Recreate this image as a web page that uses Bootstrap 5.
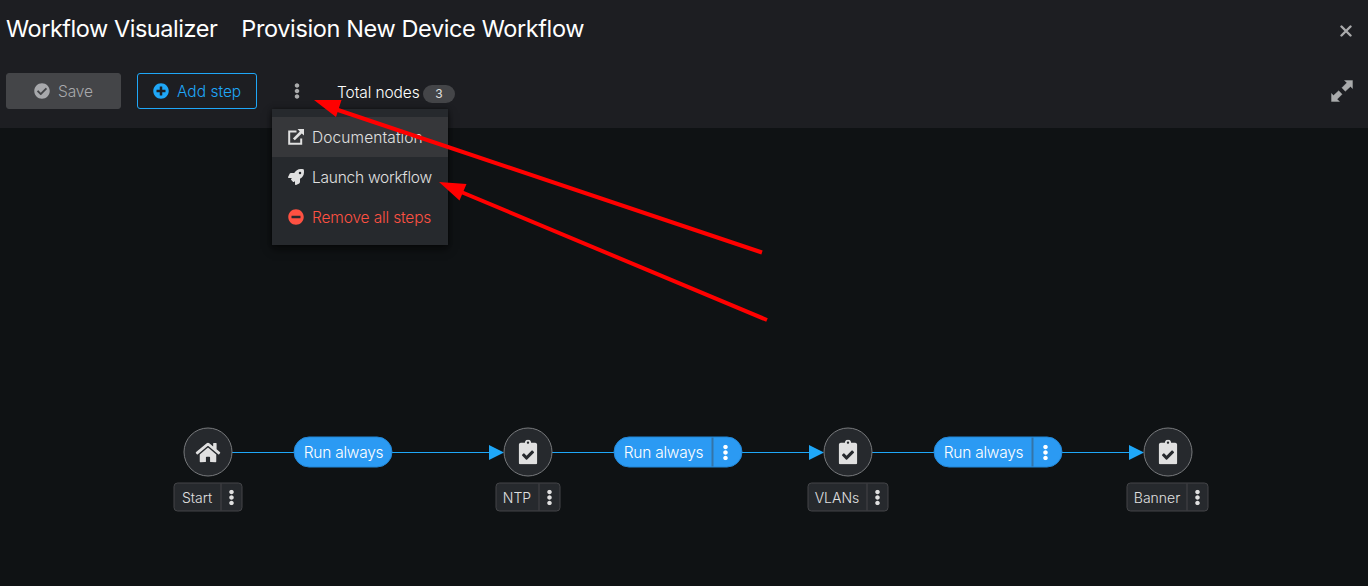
<!DOCTYPE html>
<html lang="en" data-bs-theme="dark">
<head>
<meta charset="utf-8">
<title>Workflow Visualizer</title>
<meta name="viewport" content="width=device-width, initial-scale=1">
<link href="https://cdn.jsdelivr.net/npm/bootstrap@5.3.0/dist/css/bootstrap.min.css" rel="stylesheet">
<style>
  body { font-family: Inter, "Liberation Sans", sans-serif; background: #0f1214; color: #e0e0e0; font-size: 16px; line-height: 24px; }
  svg { fill: currentColor; flex: none; }
  .top { background: #1d1e22; height: 128px; }
  .title-row { height: 58px; padding: 0 16px 0 6px; }
  .title-row h1 { font-size: 23.5px; line-height: 30px; font-weight: 400; color: #fff; letter-spacing: -.38px; }
  .title-row h1:first-child { letter-spacing: -.46px; }
  .tools { height: 36px; margin-top: 15px; padding: 0 15px 0 6px; }
  .btn-tool { --bs-btn-border-radius: 3px; --bs-btn-padding-y: 5px; --bs-btn-padding-x: 15px; --bs-btn-line-height: 24px; --bs-btn-font-size: 15.5px; font-weight: 300; height: 36px; }
  .btn-tool span, .actions .dropdown-item span { padding-top: 2px; }
  .btn-save { width: 115px; letter-spacing: -.1px; --bs-btn-disabled-bg: #444548; --bs-btn-disabled-color: #a8a9ac; --bs-btn-disabled-border-color: #444548; --bs-btn-disabled-opacity: 1; }
  .btn-add { width: 120px; --bs-btn-color: #1fa7f8; --bs-btn-border-color: #1fa7f8; }
  .dim { color: #aaabac; }
  .more { margin: 0 37px; }
  .total { font-size: 15.5px; font-weight: 300; letter-spacing: -.1px; color: #fff; width: 86px; margin-top: 4px; }
  .count { width: 32px; height: 18px; margin-top: 5px; background: #444548; font-size: 12px; line-height: 18px; }
  .actions { --bs-dropdown-bg: #26292d; --bs-dropdown-border-width: 0; --bs-dropdown-border-radius: 0; --bs-dropdown-padding-y: 8px; --bs-dropdown-link-color: #e0e0e0; --bs-dropdown-item-padding-x: 16px; --bs-dropdown-item-padding-y: 8px; --bs-dropdown-min-width: 176px; width: 176px; height: 136px; top: 26px; left: -22px; box-shadow: 0 4px 8px rgba(3,3,3,.6), 0 0 4px rgba(3,3,3,.4); }
  .actions .dropdown-item { font-size: 15.5px; font-weight: 300; height: 40px; letter-spacing: -.25px; }
  .actions .hovered { background: #36373a; letter-spacing: .1px; }
  .actions .danger { color: #fe5142; letter-spacing: -.15px; }
  .canvas { height: 458px; }
  .edges { left: 0; top: 0; }
  .node { top: 300px; width: 100px; transform: translate(-.5px, -.5px); }
  .disc { width: 49px; height: 49px; border: 1px solid #77797c; background: #26292d; padding-left: 1px; }
  .tag { height: 29px; margin-top: 6px; border: 1px solid #444548; border-radius: 4px; background: #26292d; font-size: 14px; font-weight: 300; line-height: 27px; }
  .tag .kebab { width: 21px; border-left: 1px solid #444548; }
  .pill { top: 308px; height: 31px; border: 1px solid #2387d6; background: #2b9af3; color: #fff; border-radius: 16px; font-size: 15.5px; font-weight: 300; line-height: 29px; letter-spacing: -.25px; transform: translate(.5px, .5px); }
  .pill .name { width: 97px; padding-left: 1px; }
  .pill .kebab { width: 30px; border-left: 2px solid #3474a8; padding-right: 4px; }
  .notes { left: 0; top: 0; z-index: 1100; pointer-events: none; }
</style>
</head>
<body class="overflow-hidden position-relative">
<svg width="0" height="0" class="position-absolute">
  <symbol id="dots" viewBox="0 0 192 512"><path d="M96 184c39.8 0 72 32.2 72 72s-32.2 72-72 72-72-32.2-72-72 32.2-72 72-72zM24 80c0 39.8 32.2 72 72 72s72-32.2 72-72S135.8 8 96 8 24 40.2 24 80zm0 352c0 39.8 32.2 72 72 72s72-32.2 72-72-32.2-72-72-72-72 32.2-72 72z"/></symbol>
  <symbol id="task" viewBox="0 0 384 512"><path d="M336 64h-80c0-35.3-28.7-64-64-64s-64 28.7-64 64H48C21.5 64 0 85.5 0 112v352c0 26.5 21.5 48 48 48h288c26.500 0 48-21.500 48-48V112c0-26.500-21.500-48-48-48zM192 40c13.300 0 24 10.700 24 24s-10.700 24-24 24-24-10.700-24-24 10.700-24 24-24m121.200 231.800l-143 141.800c-4.700 4.700-12.300 4.600-17-.1l-82.600-83.300c-4.700-4.700-4.600-12.300.1-17L99.100 285c4.700-4.700 12.300-4.600 17 .1l46 46.400 106-105.200c4.700-4.700 12.300-4.600 17 .1l28.200 28.400c4.700 4.800 4.600 12.300-.1 17z"/></symbol>
</svg>

<header class="top">
  <div class="title-row d-flex align-items-center">
    <h1 class="mb-0 me-4">Workflow Visualizer</h1>
    <h1 class="mb-0">Provision New Device Workflow</h1>
    <svg class="dim ms-auto" width="12" height="12" viewBox="0 0 12 12" style="margin-top:4px"><path d="M1.500 1.500L10.500 10.500M10.500 1.500L1.500 10.500" stroke="currentColor" stroke-width="2.400" stroke-linecap="round"/></svg>
  </div>
  <div class="tools d-flex align-items-center">
    <button class="btn btn-tool btn-save d-flex align-items-center justify-content-center gap-2 me-3" disabled>
      <svg width="16" height="16" viewBox="0 0 512 512"><path d="M504 256c0 136.967-111.033 248-248 248S8 392.967 8 256 119.033 8 256 8s248 111.033 248 248zM227.314 387.314l184-184c6.248-6.248 6.248-16.379 0-22.627l-22.627-22.627c-6.248-6.249-16.379-6.249-22.628 0L216 308.118l-70.059-70.059c-6.248-6.248-16.379-6.248-22.628 0l-22.627 22.627c-6.248 6.248-6.248 16.379 0 22.627l104 104c6.249 6.249 16.379 6.249 22.628.001z"/></svg>
      <span>Save</span>
    </button>
    <button class="btn btn-tool btn-add d-flex align-items-center gap-2">
      <svg width="16" height="16" viewBox="0 0 512 512"><path d="M256 8C119 8 8 119 8 256s111 248 248 248 248-111 248-248S393 8 256 8zm144 276c0 6.600-5.400 12-12 12h-92v92c0 6.600-5.400 12-12 12h-56c-6.600 0-12-5.400-12-12v-92h-92c-6.600 0-12-5.400-12-12v-56c0-6.600 5.400-12 12-12h92v-92c0-6.600 5.400-12 12-12h56c6.600 0 12 5.400 12 12v92h92c6.600 0 12 5.400 12 12v56z"/></svg>
      <span class="text-nowrap">Add step</span>
    </button>
    <div class="dropdown more d-flex align-items-center dim">
      <svg width="6" height="16"><use href="#dots"/></svg>
      <ul class="dropdown-menu actions show">
        <li><a class="dropdown-item hovered d-flex align-items-center gap-2" href="#">
          <svg width="16" height="16" viewBox="0 0 16 16"><path d="M8.500 2.500H1.200V14.800H13.200V9.500" fill="none" stroke="currentColor" stroke-width="2"/><path d="M9.500 0H16V6.500L13.800 4.400L6.800 11.300L4.900 9.400L11.800 2.400Z"/></svg>
          <span>Documentation</span></a></li>
        <li><a class="dropdown-item d-flex align-items-center gap-2" href="#">
          <svg width="16" height="16" viewBox="0 0 512 512"><path d="M505.120 19.094c-1.189-5.531-6.658-11-12.207-12.188C460.716 0 435.507 0 410.407 0 307.175 0 245.269 55.203 199.052 128H94.838c-16.348.016-35.557 11.875-42.887 26.484L2.516 253.297A28.400 28.400 0 0 0 0 264a24.009 24.009 0 0 0 24.006 24h103.810l-22.474 22.469c-11.366 11.361-12.996 32.258 0 45.250l50.904 50.906c11.156 11.188 32.156 13.156 45.277 0l22.475-22.469V488a24.009 24.009 0 0 0 24.006 24 28.559 28.559 0 0 0 10.707-2.516l98.728-49.390c14.629-7.297 26.508-26.500 26.508-42.860V312.797c72.598-46.313 128.035-108.406 128.035-211.094.093-25.203.093-50.406-6.862-82.609zM384.040 168A40 40 0 1 1 424.050 128 40.023 40.023 0 0 1 384.040 168z"/></svg>
          <span>Launch workflow</span></a></li>
        <li><a class="dropdown-item danger d-flex align-items-center gap-2" href="#">
          <svg width="16" height="16" viewBox="0 0 512 512"><path d="M256 8C119 8 8 119 8 256s111 248 248 248 248-111 248-248S393 8 256 8zM124 296c-6.600 0-12-5.400-12-12v-56c0-6.600 5.400-12 12-12h264c6.600 0 12 5.400 12 12v56c0 6.600-5.400 12-12 12H124z"/></svg>
          <span>Remove all steps</span></a></li>
      </ul>
    </div>
    <span class="total text-nowrap">Total nodes</span>
    <span class="count rounded-pill text-center">3</span>
    <svg class="dim ms-auto" width="22" height="22" viewBox="0 0 22 22"><path d="M13.500 0.500H21.500V8.500L19.500 6.500L14.300 11.300L10.900 7.800L15.900 2.800ZM0.500 13.500L2.500 15.500L7.700 10.700L11.100 14.200L6.100 19.200L8.500 21.500H0.500Z" stroke="currentColor" stroke-width=".4" stroke-linejoin="round"/></svg>
  </div>
</header>

<main class="canvas position-relative">
  <svg class="edges position-absolute" width="1368" height="458">
    <path d="M232 324.500H490M552 324.500H810M872 324.500H1130" stroke="#1fa7f8" fill="none"/>
    <path d="M489 317L504 324.500L489 332ZM809 317L824 324.500L809 332ZM1129 317L1144 324.500L1129 332Z" fill="#1fa7f8"/>
  </svg>

  <div class="pill position-absolute d-flex" style="left:293px"><span class="name text-center">Run always</span></div>
  <div class="pill position-absolute d-flex" style="left:613px"><span class="name text-center">Run always</span><span class="kebab d-flex align-items-center justify-content-center"><svg width="6" height="16"><use href="#dots"/></svg></span></div>
  <div class="pill position-absolute d-flex" style="left:933px"><span class="name text-center">Run always</span><span class="kebab d-flex align-items-center justify-content-center"><svg width="6" height="16"><use href="#dots"/></svg></span></div>

  <div class="node position-absolute d-flex flex-column align-items-center" style="left:158px">
    <div class="disc rounded-circle d-flex align-items-center justify-content-center"><svg width="25" height="22" viewBox="0 0 576 512"><path d="M280.370 148.260L96 300.110V464a16 16 0 0 0 16 16l112.060-.290a16 16 0 0 0 15.920-16V368a16 16 0 0 1 16-16h64a16 16 0 0 1 16 16v95.640a16 16 0 0 0 16 16.050L464 480a16 16 0 0 0 16-16V300L295.670 148.260a12.190 12.190 0 0 0-15.300 0zM571.600 251.470L488 182.560V44.050a12 12 0 0 0-12-12h-56a12 12 0 0 0-12 12v72.610L318.470 43a48 48 0 0 0-61 0L4.340 251.470a12 12 0 0 0-1.600 16.900l25.500 31A12 12 0 0 0 45.150 301l235.220-193.740a12.190 12.190 0 0 1 15.300 0L530.900 301a12 12 0 0 0 16.900-1.600l25.500-31a12 12 0 0 0-1.700-16.930z"/></svg></div>
    <div class="tag d-flex" style="width:69px"><span class="flex-grow-1 text-center">Start</span><span class="kebab d-flex align-items-center justify-content-center"><svg width="6" height="16"><use href="#dots"/></svg></span></div>
  </div>
  <div class="node position-absolute d-flex flex-column align-items-center" style="left:478px">
    <div class="disc rounded-circle d-flex align-items-center justify-content-center"><svg width="19" height="25"><use href="#task"/></svg></div>
    <div class="tag d-flex" style="width:65px"><span class="flex-grow-1 text-center">NTP</span><span class="kebab d-flex align-items-center justify-content-center"><svg width="6" height="16"><use href="#dots"/></svg></span></div>
  </div>
  <div class="node position-absolute d-flex flex-column align-items-center" style="left:798px">
    <div class="disc rounded-circle d-flex align-items-center justify-content-center"><svg width="19" height="25"><use href="#task"/></svg></div>
    <div class="tag d-flex" style="width:81px"><span class="flex-grow-1 text-center">VLANs</span><span class="kebab d-flex align-items-center justify-content-center"><svg width="6" height="16"><use href="#dots"/></svg></span></div>
  </div>
  <div class="node position-absolute d-flex flex-column align-items-center" style="left:1118px">
    <div class="disc rounded-circle d-flex align-items-center justify-content-center"><svg width="19" height="25"><use href="#task"/></svg></div>
    <div class="tag d-flex" style="width:82px"><span class="flex-grow-1 text-center">Banner</span><span class="kebab d-flex align-items-center justify-content-center"><svg width="6" height="16"><use href="#dots"/></svg></span></div>
  </div>
</main>

<!-- callout arrows over the toolbar and menu -->
<svg class="notes position-absolute" width="1368" height="586">
  <path d="M762 252.500L335 109M767 320L460 191.500" stroke="#f00" stroke-width="4" fill="none"/>
  <path d="M314 100L341.500 100L336 117ZM439 182L466.500 184L459.500 200.500Z" fill="#f00"/>
</svg>
<script src="https://cdn.jsdelivr.net/npm/bootstrap@5.3.0/dist/js/bootstrap.bundle.min.js"></script>
</body>
</html>
